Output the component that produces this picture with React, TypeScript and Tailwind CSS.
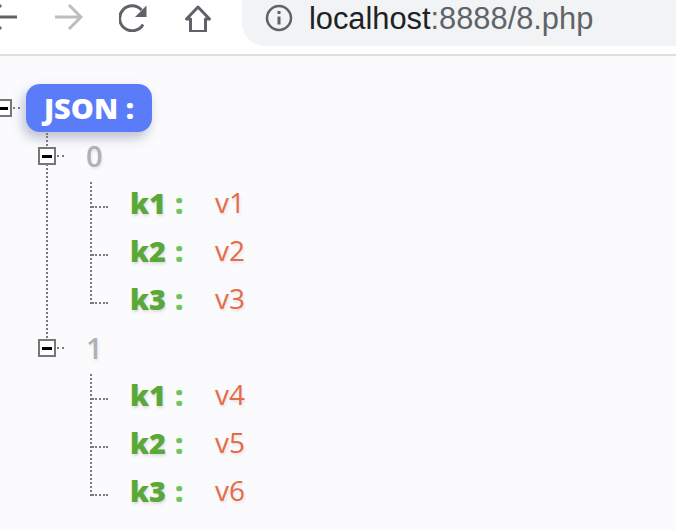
import React from "react";

const treeFont = { fontFamily: '"Open Sans", "DejaVu Sans", sans-serif' };

const groups = [
  { index: "0", rows: [["k1", "v1"], ["k2", "v2"], ["k3", "v3"]] },
  { index: "1", rows: [["k1", "v4"], ["k2", "v5"], ["k3", "v6"]] },
];

function Toggle() {
  return (
    <span className="flex h-[18px] w-[18px] shrink-0 items-center justify-center border-2 border-[#777777] bg-white">
      <span className="h-[3px] w-[10px] shrink-0 bg-black" />
    </span>
  );
}

function Dots({ className }: { className: string }) {
  return <span className={`border-t-2 border-dotted border-[#7a7a7a] ${className}`} />;
}

export default function App() {
  return (
    <div className="h-[530px] w-[676px] overflow-hidden bg-[#fbfbfe]" style={treeFont}>
      {/* browser toolbar */}
      <header className="flex h-[56px] items-start border-b-2 border-[#dfdfdf] bg-white">
        <svg className="ml-[-14px] mt-[3px] shrink-0" width="32" height="28" viewBox="0 0 32 28" fill="none" stroke="#5f6368" strokeWidth="3">
          <path d="M31 14H3M15 2 3 14l12 12" />
        </svg>
        <svg className="ml-[37px] mt-[3px] shrink-0" width="28" height="28" viewBox="0 0 28 28" fill="none" stroke="#bdbdbd" strokeWidth="3">
          <path d="M0 14h25M14 2l12 12-12 12" />
        </svg>
        <svg className="ml-[36px] mt-[4px] shrink-0" width="30" height="28" viewBox="0 0 30 28" fill="none">
          <path d="M24 20.5A12.5 12.5 0 1 1 22.5 6" stroke="#5f6368" strokeWidth="3" />
          <path d="M27.5 1.5V13H16z" fill="#5f6368" />
        </svg>
        <svg className="ml-[35px] mt-[4px] shrink-0" width="28" height="28" viewBox="0 0 28 28" fill="none" stroke="#5f6368" strokeWidth="3">
          <path d="M14 3 2.5 15H6.5V27.5H21.5V15H25.5z" strokeLinejoin="round" />
        </svg>
        <div className="ml-[30px] flex h-[46px] flex-1 items-center rounded-bl-[23px] bg-[#f1f3f4] pl-[23px]">
          <svg className="shrink-0 -translate-y-[5px]" width="28" height="28" viewBox="0 0 28 28" fill="none" stroke="#5f6368">
            <circle cx="14" cy="14" r="12" strokeWidth="2.5" />
            <path d="M14 12.5v8" strokeWidth="3" />
            <path d="M14 7v3" strokeWidth="3" />
          </svg>
          <div
            className="ml-[16px] -translate-y-[4px] whitespace-nowrap text-[30.8px] leading-none text-[#5f6368]"
            style={{ fontFamily: '"Liberation Sans", Arial, sans-serif' }}
          >
            <span className="text-[#202124]">localhost</span>:8888/8.php
          </div>
        </div>
      </header>

      {/* json tree */}
      <main className="pt-[28px]">
        <div className="flex h-12 items-center">
          <span className="ml-[-6px]"><Toggle /></span>
          <Dots className="ml-[1px] w-[7px]" />
          <div className="ml-[6px] flex h-12 w-[126px] items-center justify-center rounded-[14px] bg-[#5b7cf8] text-[29px] font-extrabold text-white shadow-[-3px_6px_12px_rgba(70,80,120,0.35)]">
            JSON :
          </div>
        </div>

        {groups.map((group, i) => (
          <div key={group.index} className="relative">
            {/* vertical connector from the parent down to the next toggle */}
            {i === 0 && (
              <span className="absolute left-[46px] top-[1px] h-[209px] border-l-2 border-dotted border-[#7a7a7a]" />
            )}
            <div className="relative flex h-12 items-center pl-[38px]">
              <Toggle />
              <Dots className="ml-[1px] w-[7px]" />
              <span className="ml-[22px] text-[29px] font-semibold text-[#b0b0b6] [text-shadow:1px_2px_3px_rgba(0,0,0,0.08)]">{group.index}</span>
            </div>
            <div className="relative">
              <span className="absolute left-[90px] top-[2px] h-[122px] border-l-2 border-dotted border-[#7a7a7a]" />
              {group.rows.map(([k, v]) => (
                <div key={k} className="flex h-12 items-center pl-[92px]">
                  <Dots className="mt-[6px] w-[16px]" />
                  <span className="mb-[4px] ml-[22px] w-[45px] text-[29px] font-extrabold leading-none text-[#5aa838] [text-shadow:1px_2px_3px_rgba(0,0,0,0.12)]">{k}</span>
                  <span className="mb-[4px] w-[40px] text-[29px] font-extrabold leading-none text-[#6cc65f]">:</span>
                  <span className="mb-[4px] text-[28px] leading-none text-[#e46c48] [text-shadow:1px_2px_3px_rgba(0,0,0,0.1)]">{v}</span>
                </div>
              ))}
            </div>
          </div>
        ))}
      </main>
    </div>
  );
}
